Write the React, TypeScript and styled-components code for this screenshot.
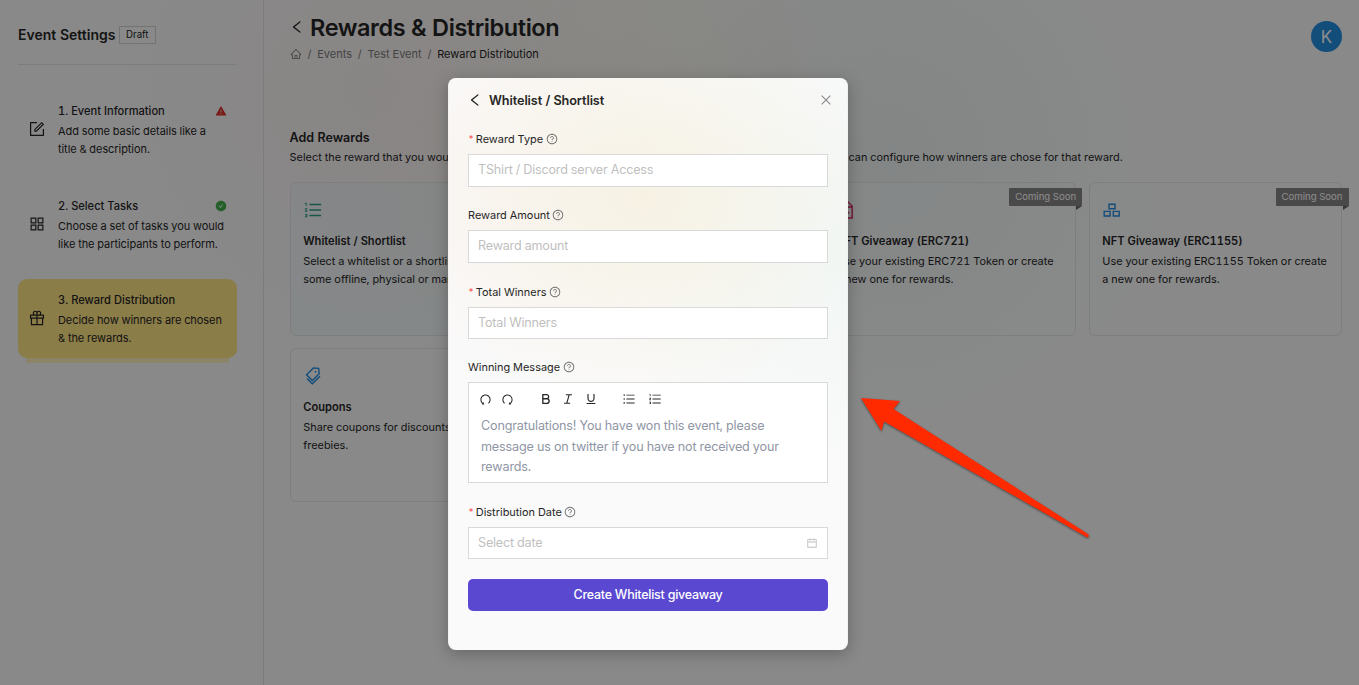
import React from "react";
import styled, { createGlobalStyle } from "styled-components";
import {
  AiOutlineForm,
  AiOutlineAppstore,
  AiOutlineGift,
  AiFillWarning,
  AiFillCheckCircle,
  AiOutlineLeft,
  AiOutlineHome,
  AiOutlineQuestionCircle,
  AiOutlineCalendar,
  AiOutlineTags,
  AiOutlineClose,
  AiOutlineUndo,
  AiOutlineRedo,
  AiOutlineBold,
  AiOutlineItalic,
  AiOutlineUnderline,
  AiOutlineUnorderedList,
  AiOutlineOrderedList,
  AiOutlineFileImage,
  AiOutlineTrophy,
} from "react-icons/ai";

const GlobalStyle = createGlobalStyle`
  * { box-sizing: border-box; }
  body {
    margin: 0;
    overflow: hidden;
    font-family: Inter, "Liberation Sans", sans-serif;
    font-size: 11px;
    font-variant-numeric: tabular-nums;
    color: #262626;
  }
  svg { display: block; flex: none; }
`;

const Page = styled.div`
  position: relative;
  display: flex;
  width: 1359px;
  height: 685px;
  overflow: hidden;
  background:
    radial-gradient(circle at 620px 160px, rgba(246, 240, 218, 0.5), rgba(246, 240, 218, 0) 270px),
    radial-gradient(circle at 880px 160px, rgba(236, 243, 243, 0.8), rgba(236, 243, 243, 0) 290px),
    radial-gradient(circle at 370px 90px, rgba(248, 241, 241, 0.8), rgba(248, 241, 241, 0) 280px),
    #fafafa;
`;

const Sidebar = styled.aside`
  width: 264px;
  padding: 25px 26px 0 18px;
  border-right: 1px solid #e4e2e2;
`;

const SidebarHeader = styled.div`
  display: flex;
  align-items: center;
  gap: 3.5px;
  height: 40px;
  padding-bottom: 20px;
  border-bottom: 1px solid #dfe5e5;
`;

const SidebarTitle = styled.h2`
  margin: 0;
  font-size: 14px;
  font-weight: 600;
  line-height: 20px;
  white-space: nowrap;
`;

const Tag = styled.span`
  height: 18px;
  padding: 0 6px;
  border: 1px solid #d2d2d2;
  font-size: 9.7px;
  line-height: 16px;
`;

const Steps = styled.div`
  display: flex;
  flex-direction: column;
  gap: 15.5px;
  padding-top: 25px;
`;

const StepBox = styled.div<{ $active?: boolean }>`
  display: flex;
  align-items: center;
  gap: 12px;
  height: 79px;
  padding: 0 10px;
  border-radius: 9px;
  background: ${(p) => (p.$active ? "#fde383" : "transparent")};
  box-shadow: ${(p) => (p.$active ? "0 13px 0 -8px #fdf0bf" : "none")};
  > svg { margin-bottom: 1px; }
`;

const StepBody = styled.div`
  flex: 1;
  min-width: 0;
  display: flex;
  flex-direction: column;
  gap: 3px;
  padding-top: 2px;
`;

const StepTitle = styled.div`
  display: flex;
  align-items: center;
  justify-content: space-between;
  height: 18px;
  font-size: 11.1px;
  font-weight: 500;
`;

const StepText = styled.div`
  font-size: 11px;
  line-height: 17.6px;
  letter-spacing: -0.07px;
  white-space: pre;
`;

const Main = styled.main`
  flex: 1;
  min-width: 0;
  padding: 11px 17px 0 25.6px;
`;

const TitleRow = styled.div`
  display: flex;
  align-items: center;
  gap: 5.5px;
  height: 33px;
  padding-bottom: 1px;
  margin-left: -1px;
`;

const PageTitle = styled.h1`
  margin: 0;
  font-size: 23.5px;
  font-weight: 600;
  letter-spacing: -0.43px;
`;

const Breadcrumb = styled.nav`
  display: flex;
  align-items: center;
  gap: 5.8px;
  height: 20px;
  font-size: 11px;
  color: #7b7b7b;
`;

const Crumb = styled.span<{ $current?: boolean }>`
  color: ${(p) => (p.$current ? "#262626" : "inherit")};
`;

const SectionTitle = styled.h3`
  margin: 64px 0 0;
  font-size: 12.5px;
  font-weight: 600;
  line-height: 19px;
`;

const SectionText = styled.p`
  margin: 1px 0 16px;
  font-size: 10.9px;
  line-height: 18px;
  white-space: nowrap;
`;

const CardGrid = styled.div`
  display: grid;
  grid-template-columns: repeat(4, minmax(0, 1fr));
  gap: 12px 13px;
`;

const Card = styled.article<{ $tinted?: boolean }>`
  position: relative;
  height: 154px;
  padding: 17px 12.7px;
  border: 1px solid #e6e6e6;
  border-radius: 6px;
  background: ${(p) => (p.$tinted ? "rgba(236, 245, 246, 0.6)" : "rgba(247, 249, 249, 0.4)")};
`;

const CardTitle = styled.h4`
  margin: 11.6px 0 3.4px;
  font-size: 11.1px;
  font-weight: 600;
  line-height: 18px;
`;

const CardText = styled.p`
  margin: 0;
  font-size: 10.9px;
  line-height: 17.6px;
  white-space: pre;
`;

const Ribbon = styled.span`
  position: absolute;
  top: 5px;
  right: -7.5px;
  height: 18px;
  padding: 0 6px;
  border-radius: 1px 1px 0 1px;
  background: #868686;
  color: #fff;
  font-size: 9.6px;
  line-height: 18px;
  white-space: nowrap;
  &::after {
    content: "";
    position: absolute;
    right: 0;
    top: 18px;
    border-top: 4px solid #666;
    border-right: 6px solid transparent;
  }
`;

const Avatar = styled.div`
  position: absolute;
  top: 21px;
  right: 17px;
  display: flex;
  align-items: center;
  justify-content: center;
  width: 31px;
  height: 31px;
  border-radius: 50%;
  background: #248cdf;
  color: #fff;
  font-size: 17px;
`;

const Overlay = styled.div`
  position: absolute;
  inset: 0;
  padding: 78px 0 0 448px;
  background: rgba(0, 0, 0, 0.45);
`;

const Modal = styled.section`
  width: 400px;
  height: 572px;
  padding: 13px 20px 0;
  border: 1px solid #f2f2f2;
  border-width: 0 1px;
  border-radius: 8px;
  background:
    radial-gradient(ellipse 230px 210px at 195px 120px, rgba(246, 241, 226, 0.95), rgba(246, 241, 226, 0) 100%),
    radial-gradient(circle at 390px 170px, rgba(240, 246, 244, 0.9), rgba(240, 246, 244, 0) 230px),
    radial-gradient(circle at 30px 110px, rgba(250, 245, 243, 0.9), rgba(250, 245, 243, 0) 200px),
    #fafafa;
  box-shadow: 0 4px 16px rgba(0, 0, 0, 0.25);
`;

const ModalHeader = styled.header`
  display: flex;
  align-items: center;
  height: 18px;
  margin: 0 -5.5px 21px -2px;
`;

const ModalTitle = styled.h2`
  flex: 1;
  margin: 0 0 0 6px;
  font-size: 12.7px;
  font-weight: 600;
  letter-spacing: -0.1px;
`;

const Field = styled.div<{ $gap: number }>`
  margin: 0 -1px ${(p) => p.$gap}px;
`;

const Label = styled.label`
  display: flex;
  align-items: center;
  height: 18px;
  margin-bottom: 6px;
  font-size: 10.95px;
  svg { margin-left: 2.5px; color: #707070; }
`;

const Required = styled.span`
  width: 7.8px;
  padding-bottom: 2px;
  color: #ff4d4f;
  font-size: 9.5px;
`;

const InputBox = styled.div<{ $height: number }>`
  display: flex;
  align-items: center;
  justify-content: space-between;
  height: ${(p) => p.$height}px;
  padding: 0 9px 1.5px;
  border: 1px solid #d9d9d9;
  background: #fff;
  color: #bfbfbf;
  font-size: 12.6px;
  letter-spacing: -0.2px;
  svg { position: relative; top: 1px; }
`;

const Editor = styled.div`
  height: 101px;
  padding: 9px 12px 0;
  border: 1px solid #d9d9d9;
  background: #fff;
`;

const Toolbar = styled.div`
  display: flex;
  align-items: center;
  gap: 9px;
  height: 14px;
  margin-left: -2px;
  color: #262626;
`;

const ToolGroup = styled.div<{ $gap: number }>`
  display: flex;
  align-items: center;
  gap: ${(p) => p.$gap}px;
  margin-right: 15.5px;
`;

const Message = styled.div`
  margin-top: 10px;
  color: #8f96a5;
  font-size: 12.6px;
  line-height: 20.6px;
  letter-spacing: -0.16px;
  white-space: pre;
`;

const Submit = styled.button`
  display: block;
  width: 360px;
  height: 32px;
  margin: 0 -1px;
  padding: 0 0 1px;
  border: 0;
  border-radius: 5px;
  background: #5a48d1;
  color: #fff;
  font-family: inherit;
  font-size: 12.5px;
  font-weight: 500;
  letter-spacing: -0.25px;
`;

const Arrow = styled.svg`
  position: absolute;
  left: 850px;
  top: 385px;
  filter: drop-shadow(0 1px 1px rgba(0, 0, 0, 0.45));
`;

const BlocksIcon = () => (
  <svg width="20" height="20" viewBox="0 0 20 20" fill="none" stroke="#248cdf" strokeWidth="1.4">
    <path d="M7 4.2h6v4.6H7zM2.2 11.4h5.9V16H2.2zM11.3 11.4h5.9V16h-5.9z" />
  </svg>
);

type StepProps = { icon: React.ReactNode; title: string; text: string; status?: React.ReactNode; active?: boolean };

const Step = ({ icon, title, text, status, active }: StepProps) => (
  <StepBox $active={active}>
    {icon}
    <StepBody>
      <StepTitle>{title}{status}</StepTitle>
      <StepText>{text}</StepText>
    </StepBody>
  </StepBox>
);

type RewardProps = { icon: React.ReactNode; title: string; text: string; soon?: boolean; tinted?: boolean };

const Reward = ({ icon, title, text, soon, tinted }: RewardProps) => (
  <Card $tinted={tinted}>
    {icon}
    <CardTitle>{title}</CardTitle>
    <CardText>{text}</CardText>
    {soon && <Ribbon>Coming Soon</Ribbon>}
  </Card>
);

type FormFieldProps = { label: string; required?: boolean; gap: number; children: React.ReactNode };

const FormField = ({ label, required, gap, children }: FormFieldProps) => (
  <Field $gap={gap}>
    <Label>
      {required && <Required>*</Required>}
      {label}
      <AiOutlineQuestionCircle size={12} />
    </Label>
    {children}
  </Field>
);

export default function App() {
  return (
    <Page>
      <GlobalStyle />
      <Sidebar>
        <SidebarHeader>
          <SidebarTitle>Event Settings</SidebarTitle>
          <Tag>Draft</Tag>
        </SidebarHeader>
        <Steps>
          <Step
            icon={<AiOutlineForm size={18} />}
            title="1. Event Information"
            text={"Add some basic details like a\ntitle & description."}
            status={<AiFillWarning size={12} color="#d9302c" />}
          />
          <Step
            icon={<AiOutlineAppstore size={18} />}
            title="2. Select Tasks"
            text={"Choose a set of tasks you would\nlike the participants to perform."}
            status={<AiFillCheckCircle size={12} color="#3fae49" />}
          />
          <Step
            active
            icon={<AiOutlineGift size={18} />}
            title="3. Reward Distribution"
            text={"Decide how winners are chosen\n& the rewards."}
          />
        </Steps>
      </Sidebar>
      <Main>
        <TitleRow>
          <AiOutlineLeft size={16} />
          <PageTitle>Rewards &amp; Distribution</PageTitle>
        </TitleRow>
        <Breadcrumb>
          <AiOutlineHome size={12} />
          <Crumb>/</Crumb>
          <Crumb>Events</Crumb>
          <Crumb>/</Crumb>
          <Crumb>Test Event</Crumb>
          <Crumb>/</Crumb>
          <Crumb $current>Reward Distribution</Crumb>
        </Breadcrumb>
        <SectionTitle>Add Rewards</SectionTitle>
        <SectionText>
          Select the reward that you would like to give to the winners of this event. After you have added a reward, you can configure how winners are chose for that reward.
        </SectionText>
        <CardGrid>
          <Reward
            tinted
            icon={<AiOutlineOrderedList size={20} color="#2c9c86" />}
            title="Whitelist / Shortlist"
            text={"Select a whitelist or a shortlist for\nsome offline, physical or manual"}
          />
          <Reward icon={<AiOutlineTrophy size={20} color="#248cdf" />} title="Token Giveaway" text={"Give tokens to\nthe winners."} />
          <Reward
            soon
            icon={<AiOutlineFileImage size={20} color="#d32560" />}
            title="NFT Giveaway (ERC721)"
            text={"Use your existing ERC721 Token or create\na new one for rewards."}
          />
          <Reward
            soon
            icon={<BlocksIcon />}
            title="NFT Giveaway (ERC1155)"
            text={"Use your existing ERC1155 Token or create\na new one for rewards."}
          />
          <Reward
            icon={<AiOutlineTags size={20} color="#248cdf" />}
            title="Coupons"
            text={"Share coupons for discounts or\nfreebies."}
          />
        </CardGrid>
      </Main>
      <Avatar>K</Avatar>
      <Overlay>
        <Modal>
          <ModalHeader>
            <AiOutlineLeft size={16} />
            <ModalTitle>Whitelist / Shortlist</ModalTitle>
            <AiOutlineClose size={14} color="#8a8a8a" />
          </ModalHeader>
          <FormField label="Reward Type" required gap={19}>
            <InputBox $height={33}>TShirt / Discord server Access</InputBox>
          </FormField>
          <FormField label="Reward Amount" gap={20}>
            <InputBox $height={33}>Reward amount</InputBox>
          </FormField>
          <FormField label="Total Winners" required gap={19}>
            <InputBox $height={32}>Total Winners</InputBox>
          </FormField>
          <FormField label="Winning Message" gap={20}>
            <Editor>
              <Toolbar>
                <ToolGroup $gap={9}>
                  <AiOutlineUndo size={13} />
                  <AiOutlineRedo size={13} />
                </ToolGroup>
                <ToolGroup $gap={8.5}>
                  <AiOutlineBold size={14} />
                  <AiOutlineItalic size={14} />
                  <AiOutlineUnderline size={14} />
                </ToolGroup>
                <ToolGroup $gap={12}>
                  <AiOutlineUnorderedList size={14} />
                  <AiOutlineOrderedList size={14} />
                </ToolGroup>
              </Toolbar>
              <Message>{"Congratulations! You have won this event, please\nmessage us on twitter if you have not received your\nrewards."}</Message>
            </Editor>
          </FormField>
          <FormField label="Distribution Date" required gap={20}>
            <InputBox $height={32}>
              Select date
              <AiOutlineCalendar size={12} />
            </InputBox>
          </FormField>
          <Submit>Create Whitelist giveaway</Submit>
        </Modal>
      </Overlay>
      <Arrow width="250" height="165" viewBox="850 385 250 165">
        <path
          d="M861 398L900 401L893.5 409L1088 534Q1090 536 1087.5 537.5L884 421.5L881.5 431Z"
          fill="#ff2a00"
        />
      </Arrow>
    </Page>
  );
}
